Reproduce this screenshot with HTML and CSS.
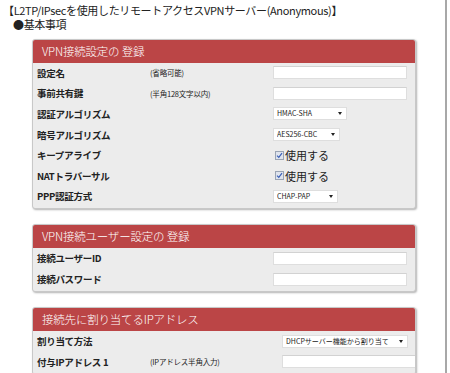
FILE: index.html
```html
<!DOCTYPE html>
<html lang="ja">

<head>
    <meta charset="UTF-8">
    <meta name="viewport" content="width=device-width, initial-scale=1.0">
    <title>リモートアクセスVPNサーバー</title>
    <link rel="stylesheet" href="styles.css">
</head>

<body>
    <div class="page">
        <p class="title">【L2TP/IPsecを使用したリモートアクセスVPNサーバー(Anonymous)】</p>
        <p class="sub">●基本事項</p>

        <!-- VPN接続設定 -->
        <div class="panel">
            <div class="panel-head">VPN接続設定の 登録</div>
            <div class="rows">
                <div class="row">
                    <span class="label">設定名</span>
                    <span class="note">(省略可能)</span>
                    <span class="ctrl"><input class="text" type="text"></span>
                </div>
                <div class="row">
                    <span class="label">事前共有鍵</span>
                    <span class="note">(半角128文字以内)</span>
                    <span class="ctrl"><input class="text" type="text"></span>
                </div>
                <div class="row">
                    <span class="label">認証アルゴリズム</span>
                    <span class="note"></span>
                    <span class="ctrl"><span class="sel w74"><select><option>HMAC-SHA</option></select></span></span>
                </div>
                <div class="row">
                    <span class="label">暗号アルゴリズム</span>
                    <span class="note"></span>
                    <span class="ctrl"><span class="sel w67"><select><option>AES256-CBC</option></select></span></span>
                </div>
                <div class="row">
                    <span class="label">キープアライブ</span>
                    <span class="note"></span>
                    <span class="ctrl"><label class="check"><span class="box"><svg width="7" height="7" viewBox="0 0 7 7"><path d="M1 3.6 L2.8 5.4 L6 1.2" fill="none" stroke="#3a5fb8" stroke-width="1.2"/></svg></span>使用する</label></span>
                </div>
                <div class="row">
                    <span class="label">NATトラバーサル</span>
                    <span class="note"></span>
                    <span class="ctrl"><label class="check"><span class="box"><svg width="7" height="7" viewBox="0 0 7 7"><path d="M1 3.6 L2.8 5.4 L6 1.2" fill="none" stroke="#3a5fb8" stroke-width="1.2"/></svg></span>使用する</label></span>
                </div>
                <div class="row">
                    <span class="label">PPP認証方式</span>
                    <span class="note"></span>
                    <span class="ctrl"><span class="sel w65"><select><option>CHAP-PAP</option></select></span></span>
                </div>
            </div>
        </div>

        <!-- ユーザー設定 -->
        <div class="panel">
            <div class="panel-head">VPN接続ユーザー設定の 登録</div>
            <div class="rows">
                <div class="row">
                    <span class="label">接続ユーザーID</span>
                    <span class="note"></span>
                    <span class="ctrl"><input class="text" type="text"></span>
                </div>
                <div class="row">
                    <span class="label">接続パスワード</span>
                    <span class="note"></span>
                    <span class="ctrl"><input class="text" type="password"></span>
                </div>
            </div>
        </div>

        <!-- IPアドレス -->
        <div class="panel wide">
            <div class="panel-head">接続先に割り当てるIPアドレス</div>
            <div class="rows">
                <div class="row">
                    <span class="label">割り当て方法</span>
                    <span class="note"></span>
                    <span class="ctrl"><span class="sel w126"><select><option>DHCPサーバー機能から割り当て</option></select></span></span>
                </div>
                <div class="row">
                    <span class="label">付与IPアドレス 1</span>
                    <span class="note">(IPアドレス半角入力)</span>
                    <span class="ctrl"><input class="text" type="text"></span>
                </div>
            </div>
        </div>
    </div>
</body>

</html>
```

FILE: styles.css
```css
* {
    margin: 0;
    padding: 0;
    box-sizing: border-box;
}
body {
    background-color: #fff;
    font-family: "Noto Sans CJK JP", "Liberation Sans", sans-serif;
    color: #222;
}
.page {
    width: 447px;
    min-height: 100vh;
    padding: 4px 0 0 3px;
    border-right: 2px solid #a8a8a8;
    overflow: hidden;
}
.title, .sub {
    font-size: 11px;
    line-height: 13.5px;
    letter-spacing: -0.35px;
}
.sub {
    padding-left: 10px;
}

.panel {
    width: 384px;
    margin-left: 29px;
    margin-top: 7.5px;
    background-color: #ececec;
    border: 1px solid #c8c8c8;
    border-radius: 3px;
    box-shadow: 1px 1px 2px rgba(0, 0, 0, 0.3);
    overflow: hidden;
}
.panel + .panel {
    margin-top: 15px;
}
.panel-head {
    height: 23px;
    line-height: 23px;
    padding-left: 9px;
    background-color: #bb4546;
    color: #fff;
    font-size: 11.5px;
    font-weight: 300;
    letter-spacing: -0.2px;
}
.rows {
    padding-bottom: 1.5px;
}
.row {
    display: grid;
    grid-template-columns: 113px 123px 1fr;
    align-items: center;
    height: 20.6px;
    padding-left: 4px;
}
.wide .row {
    grid-template-columns: 113px 132px 1fr;
}
.label {
    font-size: 9.5px;
    font-weight: bold;
    letter-spacing: -0.3px;
}
.note {
    font-size: 7.5px;
    letter-spacing: -0.2px;
}
.ctrl {
    display: flex;
    align-items: center;
}

.text {
    display: block;
    width: 134px;
    height: 13px;
    background: #fff;
    border: 1px solid #dedede;
    border-top-color: #d2d2d2;
    outline: none;
}

.sel {
    position: relative;
    display: flex;
    height: 13px;
}
.sel select {
    display: block;
    appearance: none;
    width: 100%;
    height: 13px;
    padding: 0 0 0 3px;
    background: #fff;
    border: 1px solid #dedede;
    border-radius: 0;
    font-family: "Noto Sans CJK JP", sans-serif;
    font-size: 7px;
    line-height: 11px;
    color: #222;
}
.sel::after {
    content: "";
    position: absolute;
    right: 5px;
    top: 5px;
    border-left: 2.5px solid transparent;
    border-right: 2.5px solid transparent;
    border-top: 3px solid #222;
}
.w74 { width: 74px; }
.w67 { width: 67px; }
.w65 { width: 65px; }
.w126 { width: 126px; }

.check {
    display: flex;
    align-items: center;
    font-size: 11px;
    padding-left: 2px;
}
.box {
    display: flex;
    align-items: center;
    justify-content: center;
    width: 9px;
    height: 9px;
    margin-right: 1px;
    border: 1px solid #9aa4b4;
    background: #dfe4ee;
}
```
